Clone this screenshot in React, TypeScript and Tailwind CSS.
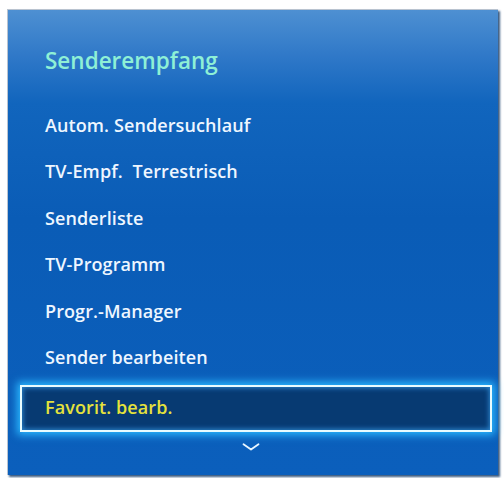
import React from "react";

const items = [
  "Autom. Sendersuchlauf",
  "TV-Empf.  Terrestrisch",
  "Senderliste",
  "TV-Programm",
  "Progr.-Manager",
  "Sender bearbeiten",
];

export default function App() {
  return (
    <div className="w-[504px] h-[478px] bg-white pl-[7px] pt-[9px] font-['Open_Sans',sans-serif]">
      <div className="w-[491px] h-[466px] border-l border-t border-[#b9c3cf] shadow-[2px_2px_2px_0_#3a5a80] bg-[linear-gradient(180deg,#4e90d2_0%,#2f78c8_10%,#1165bd_20%,#0a5cb6_45%,#0b5fbc_100%)] flex flex-col">
        <div className="pt-[36px] pl-[37px] h-[66px] text-[22.5px] leading-[30px] font-semibold text-[#8ef0d6] tracking-[0px]">
          Senderempfang
        </div>
        <div className="mt-[27px] flex flex-col">
          {items.map((t) => (
            <div
              key={t}
              className="h-[46.5px] pl-[37px] flex items-center text-[18px] font-semibold text-[#eef6ff] whitespace-pre tracking-[0.1px]"
            >
              <span className="translate-y-[-1px]">{t}</span>
            </div>
          ))}
        </div>
        <div className="mt-[3px] ml-[12px] w-[472px] h-[47px] border-2 border-[#e8fcff] bg-[#073a72] shadow-[0_0_8px_3px_#2ab8ff,inset_0_0_5px_1px_#2b86d0] flex items-center pl-[23px] pb-[3px]">
          <span className="text-[18px] font-semibold text-[#e4e23c] tracking-[0.1px]">
            Favorit. bearb.
          </span>
        </div>
        <div className="mt-[11px] flex justify-center pr-[4px]">
          <svg width="18" height="8" viewBox="0 0 18 8" fill="none">
            <path d="M1.5 1.2 L9 6.6 L16.5 1.2" stroke="#e8f6ff" strokeWidth="1.8" strokeLinecap="round" strokeLinejoin="round" />
          </svg>
        </div>
      </div>
    </div>
  );
}
